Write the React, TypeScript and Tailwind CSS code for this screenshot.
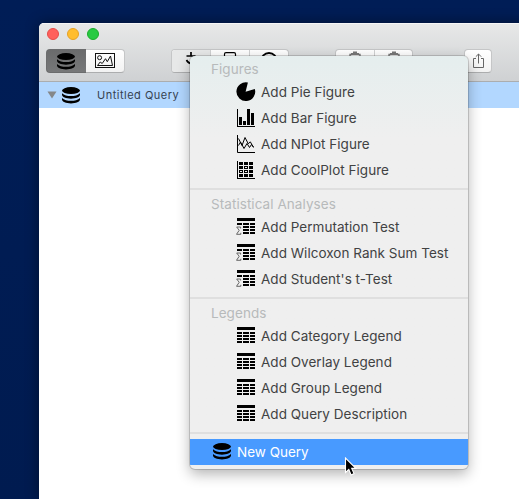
import React from 'react';

type IconProps = { className?: string };

function Database({ className = '' }: IconProps) {
  return (
    <svg width="18" height="17" viewBox="0 0 18 17" className={className}>
      <ellipse cx="9" cy="3.6" rx="9" ry="3.5" fill="#000" />
      <path d="M0 6.2C2 8.4 5.5 9 9 9s7-.6 9-2.8v1.6c0 2.2-4 3.9-9 3.9s-9-1.7-9-3.9z" fill="#000" />
      <path d="M0 10.9c2 2.2 5.5 2.8 9 2.8s7-.6 9-2.8v1.7c0 2.2-4 3.9-9 3.9s-9-1.7-9-3.9z" fill="#000" />
    </svg>
  );
}

function Picture() {
  return (
    <svg width="20" height="16" viewBox="0 0 20 16" fill="none" stroke="#111">
      <rect x=".5" y=".5" width="19" height="14" />
      <circle cx="4.6" cy="4.7" r="2" />
      <path d="M2.5 12.5 5.2 9l2 1.5 3.3-4.8 1.8 3L15.5 3l2 9.5z" />
    </svg>
  );
}

function Pie() {
  return (
    <svg width="20" height="20" viewBox="0 0 20 20">
      <path d="M9.6 9.8 11.9.5A9.4 9.4 0 1 0 18.8 6.9z" fill="#000" />
    </svg>
  );
}

function Bars() {
  return (
    <svg width="20" height="20" viewBox="0 0 20 20" shapeRendering="crispEdges">
      <path d="M1 1h1v17h17v1H1zM3 9h3v8H3zM7 13h3v4H7zM11 1h3v16h-3zM15 5h3v12h-3z" fill="#000" />
    </svg>
  );
}

function Lines() {
  return (
    <svg width="20" height="20" viewBox="0 0 20 20" fill="none" stroke="#000">
      <path d="M1.5 1v17.5H19" />
      <path d="m2.5 4.5 3.5 7L9 3.5l3.3 6.3 2-2 3.2 5.7" />
      <path d="m2.5 11.5 2-3.5 3.5 6.5 3-5 2.5 4 2-3 2 2.5" />
    </svg>
  );
}

function CoolPlot() {
  return (
    <svg width="20" height="20" viewBox="0 0 20 20" shapeRendering="crispEdges">
      <path d="M1 1h1v17h17v1H1z" fill="#000" />
      {[2, 6, 10, 14].map((y) =>
        [3, 8, 13].map((x) => <rect key={`${x}-${y}`} x={x} y={y} width="4" height="3" fill="#000" />),
      )}
      <path d="M9 7h2v1H9zM4 11h2v1H4zM9 11h2v1H9z" fill="#efefef" />
    </svg>
  );
}

function Table({ sigma = false }: { sigma?: boolean }) {
  return (
    <svg width="20" height="20" viewBox="0 0 20 20">
      <g shapeRendering="crispEdges" fill="#000">
        <rect x="1" y="1" width="18" height="3" />
        {[6, 9, 12, 15].map((y) =>
          [1, 7, 14].map((x, i) =>
            sigma && i === 0 && y > 6 ? null : (
              <rect key={`${x}-${y}`} x={x} y={y} width={i === 1 ? 6 : 5} height="2" />
            ),
          ),
        )}
      </g>
      {sigma && <path d="M4.6 11.5V10H.7L3.2 13.3.5 17.3h4.3v-1.5" fill="none" stroke="#666" strokeWidth="1" />}
    </svg>
  );
}

function Share() {
  return (
    <svg width="13" height="16" viewBox="0 0 13 16" fill="none" stroke="#666">
      <path d="M4 5.5H1.5v9h10v-9H9M6.5 10.5V1M3.8 3.7 6.5 1l2.7 2.7" />
    </svg>
  );
}

function Clipboard() {
  return (
    <svg width="12" height="20" viewBox="0 0 12 20" fill="#777">
      <path d="M4 2V.5h4V2h2v2H2V2z" />
      <path d="M2.5 3.5H1v15h10v-15H9.5" fill="none" stroke="#777" strokeWidth="1.3" />
    </svg>
  );
}

function Item({ icon, label }: { icon: React.ReactNode; label: string }) {
  return (
    <li className="flex h-[26px] items-center pl-[46px]">
      {icon}
      <span className="ml-[5px] whitespace-nowrap text-[13.5px] leading-[26px] tracking-[0.03px] text-[#414243]">
        {label}
      </span>
    </li>
  );
}

function Header({ children }: { children: React.ReactNode }) {
  return <h2 className="h-5 pl-[21px] text-[13.5px] leading-5 tracking-[0.06px] text-[#b7babb]">{children}</h2>;
}

function Separator() {
  return <div className="mt-[5px] mb-1 h-[2px] bg-[#dfdfdf]" />;
}

const segment = 'flex items-center justify-center';
const group =
  'flex h-6 overflow-hidden rounded-[4px] border border-[#c5c6c7] border-b-[#acadae] bg-gradient-to-b from-white to-[#f2f2f2]';

export default function App() {
  return (
    <div className="relative h-[499px] w-[519px] overflow-hidden bg-gradient-to-b from-[#001d56] to-[#001b50] pt-[23px] pl-[39px] font-['Inter','Liberation_Sans',sans-serif]">
      <main className="h-[476px] w-[490px] overflow-hidden rounded-tl-[5px] bg-white shadow-[0_0_14px_rgba(0,0,0,0.45)]">
        <header className="h-[59px] border-t border-b border-t-[#f5f5f5] border-b-[#abadaf] bg-gradient-to-b from-[#e7e8e8] to-[#cfd1d3]">
          <div className="flex gap-2 pt-[4px] pl-2">
            <span className="size-3 rounded-full border border-[#e34d49] bg-[#ff605c]" />
            <span className="size-3 rounded-full border border-[#e5a127] bg-[#ffbd2e]" />
            <span className="size-3 rounded-full border border-[#1cac2c] bg-[#28ca42]" />
          </div>
          <div className="mt-[9px] flex pl-[7px]">
            <div className="flex h-6 w-[79px]">
              <div className={`${segment} w-10 rounded-l-[4px] border border-r-0 border-[#6b6c6d] bg-gradient-to-b from-[#6a6b6c] to-[#777879] pr-px`}>
                <Database />
              </div>
              <div className={`${segment} flex-1 rounded-r-[4px] border border-l-0 border-[#c5c6c7] border-b-[#acadae] bg-gradient-to-b from-white to-[#f2f2f2]`}>
                <Picture />
              </div>
            </div>
            <div className={`${group} ml-[46px] w-[118px]`}>
              <div className={`${segment} w-[38px] bg-[#e7e8e8]`}>
                <svg width="18" height="20" viewBox="0 0 18 20" fill="none" stroke="#000" strokeWidth="1.7">
                  <path d="M4.5 5h9M9 1v4M4.5 9c1 2 3 3.5 5.5 3.5" />
                </svg>
              </div>
              <div className={`${segment} w-[39px] border-l border-[#d0d1d2]`}>
                <svg width="14" height="18" viewBox="0 0 14 18" fill="none" stroke="#000" strokeWidth="1.2"><rect x="1.5" y=".7" width="11" height="16" rx="1.5" /></svg>
              </div>
              <div className={`${segment} flex-1 border-l border-[#d0d1d2]`}>
                <svg width="18" height="18" viewBox="0 0 18 18" fill="none" stroke="#000" strokeWidth="1.8"><circle cx="9" cy="9" r="8" /></svg>
              </div>
            </div>
            <div className={`${group} ml-[46px] w-[78px]`}>
              <div className={`${segment} w-[38px]`}><Clipboard /></div>
              <div className={`${segment} flex-1 border-l border-[#d0d1d2]`}><Clipboard /></div>
            </div>
            <div className={`${group} ml-[51px] w-7`}>
              <div className={`${segment} flex-1`}><Share /></div>
            </div>
          </div>
        </header>
        <div className="flex h-[26px] items-center bg-[#b2d7ff] pl-[8px]">
          <svg width="10" height="8" viewBox="0 0 10 8"><path d="M.5.5h9L5 7.5z" fill="#858789" /></svg>
          <Database className="ml-[5px]" />
          <span className="ml-[17px] whitespace-nowrap text-[11px] tracking-[0.5px] text-[#354250]">Untitled Query</span>
        </div>
      </main>

      <nav className="absolute top-[56px] left-[190px] h-[413px] w-[278px] overflow-hidden rounded-[5px] bg-[#efefef] bg-gradient-to-b from-[#e5eeee] via-[#efefef] via-20% to-[#efefef] pt-[3px] shadow-[0_0_0_1px_rgba(0,0,0,0.15),0_5px_14px_rgba(0,0,0,0.3)]">
        <Header>Figures</Header>
        <ul>
          <Item icon={<Pie />} label="Add Pie Figure" />
          <Item icon={<Bars />} label="Add Bar Figure" />
          <Item icon={<Lines />} label="Add NPlot Figure" />
          <Item icon={<CoolPlot />} label="Add CoolPlot Figure" />
        </ul>
        <Separator />
        <Header>Statistical Analyses</Header>
        <ul>
          <Item icon={<Table sigma />} label="Add Permutation Test" />
          <Item icon={<Table sigma />} label="Add Wilcoxon Rank Sum Test" />
          <Item icon={<Table sigma />} label="Add Student's t-Test" />
        </ul>
        <Separator />
        <Header>Legends</Header>
        <ul>
          <Item icon={<Table />} label="Add Category Legend" />
          <Item icon={<Table />} label="Add Overlay Legend" />
          <Item icon={<Table />} label="Add Group Legend" />
          <Item icon={<Table />} label="Add Query Description" />
        </ul>
        <Separator />
        <div className="mt-[5px] flex h-[26px] items-center bg-[#489aff] pl-[23px]">
          <Database className="mb-px" />
          <span className="ml-[6px] whitespace-nowrap text-[13.5px] leading-[26px] text-white">New Query</span>
        </div>
      </nav>

      <svg className="absolute top-[457px] left-[344px]" width="16" height="22" viewBox="0 0 16 22">
        <path d="M1.5 1v14.5l3.3-3 2.3 5.4 2.9-1.3-2.3-5.2h4.2z" fill="#000" stroke="#fff" strokeWidth="1.1" />
      </svg>
    </div>
  );
}
